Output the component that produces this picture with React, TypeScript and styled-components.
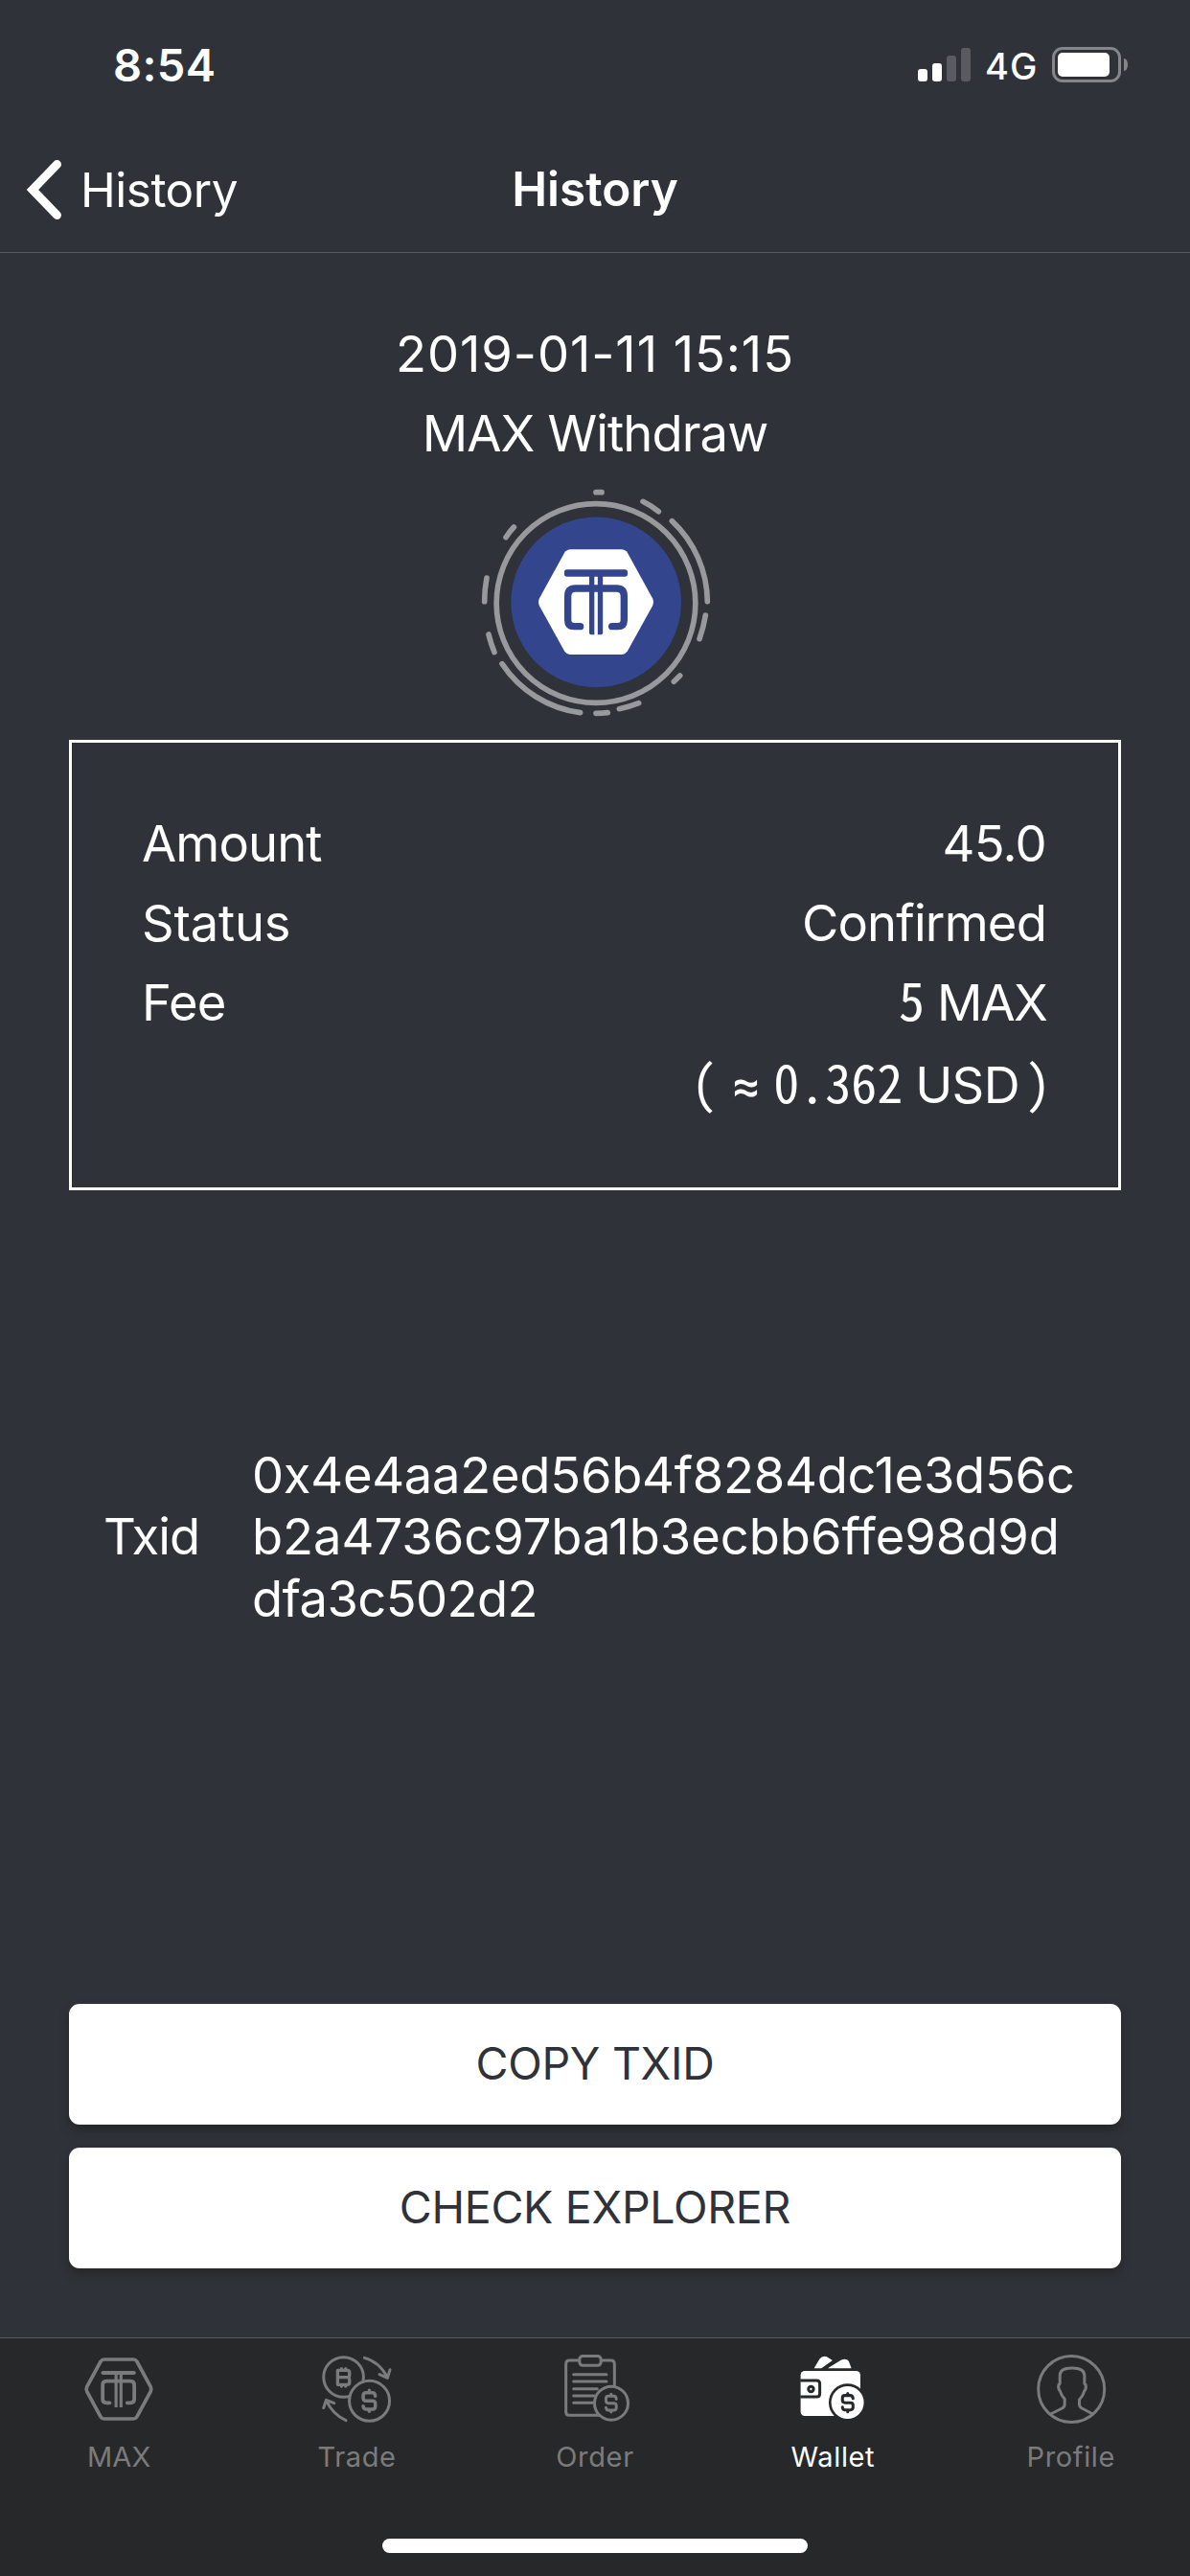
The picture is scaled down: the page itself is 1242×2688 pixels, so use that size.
import React from "react";
import styled, { createGlobalStyle } from "styled-components";

const color = {
  page: "#2f3239",
  bar: "#27282a",
  line: "#5a5b5f",
  muted: "#7b7b7b",
  ring: "#98999d",
  brand: "#33458c",
  white: "#ffffff",
};

const GlobalStyle = createGlobalStyle`
  * { box-sizing: border-box; }
  body {
    margin: 0;
    background: ${color.page};
    color: ${color.white};
    font-family: Inter, "Liberation Sans", sans-serif;
  }
`;

const Screen = styled.div`
  width: 1242px;
  height: 2688px;
  display: flex;
  flex-direction: column;
  background: ${color.page};
  overflow: hidden;
`;

/* Status bar */
const StatusBar = styled.header`
  height: 132px;
  padding: 3px 65px 0 118px;
  display: flex;
  align-items: center;
  justify-content: space-between;
`;
const Clock = styled.span`
  font-size: 47px;
  font-weight: 600;
  letter-spacing: 0.4px;
`;
const StatusIcons = styled.div`
  display: flex;
  align-items: center;
`;
const Signal = styled.div`
  display: flex;
  align-items: flex-end;
  gap: 5px;
  height: 35px;
`;
const SignalBar = styled.span<{ $height: number; $on: boolean }>`
  width: 10px;
  height: ${(p) => p.$height}px;
  border-radius: 3px;
  background: ${(p) => (p.$on ? color.white : "#595b60")};
`;
const Network = styled.span`
  width: 53px;
  margin: 3px 17px 0 15px;
  font-size: 38px;
  font-weight: 500;
  letter-spacing: 1.1px;
  white-space: nowrap;
`;
const Battery = styled.div`
  width: 72px;
  height: 37px;
  padding: 3px;
  border: 3px solid #858689;
  border-radius: 11px;
`;
const BatteryLevel = styled.div`
  width: 54px;
  height: 25px;
  border-radius: 5px;
  background: ${color.white};
`;
const BatteryCap = styled.div`
  width: 4px;
  height: 13px;
  margin-left: 3px;
  border-radius: 0 4px 4px 0 / 0 6px 6px 0;
  background: #858689;
`;

/* Navigation bar */
const NavBar = styled.nav`
  height: 132px;
  padding: 0 27px;
  display: grid;
  grid-template-columns: 1fr auto 1fr;
  align-items: center;
  border-bottom: 1px solid ${color.line};
`;
const BackButton = styled.a`
  display: flex;
  align-items: center;
  gap: 20px;
  font-size: 49.5px;
  letter-spacing: -0.5px;
`;
const NavTitle = styled.h1`
  margin: 0 0 2px;
  font-size: 49.5px;
  font-weight: 600;
`;

/* Content */
const Main = styled.main`
  flex: 1;
  padding: 64.4px 72px 72px;
  display: flex;
  flex-direction: column;
  font-size: 52.5px;
`;
const Summary = styled.section`
  display: flex;
  flex-direction: column;
  align-items: center;
  line-height: 83px;
  & > svg {
    display: block;
    margin: 12.3px 0 25.3px;
  }
`;
const Line = styled.div<{ $tracking: number }>`
  letter-spacing: ${(p) => p.$tracking}px;
`;
const Card = styled.section`
  height: 470px;
  padding: 64.4px 75px 0 73px;
  border: 3px solid ${color.white};
`;
const Row = styled.div`
  display: flex;
  justify-content: space-between;
  line-height: 83px;
`;
const RowText = styled.span<{ $tracking?: number }>`
  letter-spacing: ${(p) => p.$tracking ?? -0.9}px;
  white-space: nowrap;
`;
const Value = styled.span`
  display: flex;
  align-items: baseline;
`;
const MonoDigits = styled.span`
  font-family: "Noto Sans Mono CJK SC", "Noto Sans CJK SC", monospace;
  font-size: 54px;
  line-height: 0;
  letter-spacing: 0;
`;
const Conversion = styled.div`
  margin-right: -5px;
  display: flex;
  justify-content: flex-end;
  align-items: baseline;
  line-height: 89px;
`;
const Paren = styled.span`
  width: 27px;
  font-family: "Noto Sans Mono CJK SC", monospace;
  font-size: 54px;
  line-height: 0;
`;
const Approx = styled.span`
  width: 27px;
  margin: 0 16px;
  text-align: center;
  font-family: Roboto, sans-serif;
  font-size: 50px;
  font-weight: 500;
  line-height: 0;
`;
const Unit = styled.span`
  margin: 0 6px 0 13px;
  letter-spacing: -0.6px;
`;
const TxRow = styled.section`
  margin-top: 265.2px;
  padding-left: 36px;
  display: flex;
  align-items: center;
  line-height: 64.3px;
`;
const TxLabel = styled.div`
  width: 155px;
  letter-spacing: -1px;
`;
const Actions = styled.div`
  margin-top: auto;
  display: grid;
  gap: 24px;
`;
const ActionButton = styled.button`
  height: 126px;
  padding: 0 0 2px;
  border: 0;
  border-radius: 11px;
  background: ${color.white};
  color: #2f3239;
  font: 400 46.5px Inter, "Liberation Sans", sans-serif;
  letter-spacing: -0.3px;
  box-shadow: 0 6px 10px rgba(32, 32, 32, 0.6);
`;

/* Tab bar */
const TabBar = styled.footer`
  height: 249px;
  padding: 13px 0 24px;
  display: flex;
  flex-direction: column;
  align-items: center;
  justify-content: space-between;
  border-top: 1px solid ${color.line};
  background: ${color.bar};
`;
const Tabs = styled.div`
  width: 100%;
  display: grid;
  grid-template-columns: repeat(5, 1fr);
`;
const Tab = styled.a<{ $active?: boolean; $tracking?: number }>`
  display: flex;
  flex-direction: column;
  align-items: center;
  gap: 12.5px;
  color: ${(p) => (p.$active ? color.white : color.muted)};
  font-size: 29px;
  line-height: 36px;
  letter-spacing: ${(p) => p.$tracking ?? 0.65}px;
`;
const HomeIndicator = styled.div`
  width: 444px;
  height: 15px;
  border-radius: 8px;
  background: ${color.white};
`;

const CoinBadge = () => (
  <svg width="240" height="240" viewBox="360 560 720 720" fill="none" overflow="visible">
    <circle cx="723.5" cy="924" r="266.5" fill={color.brand} />
    <circle cx="723" cy="927.5" r="311.5" stroke={color.ring} strokeWidth="17" />
    <g stroke={color.ring} strokeWidth="17" strokeLinecap="round">
      <path d="M723 580h18M870 609q26 13 49 31M961 670A349 349 0 0 1 1072 922M1066 965q-6 38-19 74M986 1154l-19 19M857 1240q-30 12-61 18M760 1270q-18 2-37 2M674 1270A349 349 0 0 1 429 1117M405 1081q-11-27-18-56M374 922q0-37 7-74M441 721q11-17 25-32" />
    </g>
    <path
      fill={color.white}
      d="M644 759H802Q815 759 822 770L900 912Q906 924 900 936L822 1077Q815 1088 802 1088H644Q631 1088 624 1077L546 936Q540 924 546 912L624 770Q631 759 644 759Z"
    />
    <g stroke={color.brand} strokeWidth="22" strokeLinecap="round">
      <path d="M674 1000H655Q635 1000 635 980V905Q635 881 659 881H787Q811 881 811 905V980Q811 1000 791 1000H773" />
    </g>
    <rect x="624" y="822" width="198" height="22" rx="8" fill={color.brand} />
    <path fill={color.brand} d="M702 840h16v186h-10q-6 0-6-6zM728.500 840h16v180q0 6-6 6h-10z" />
  </svg>
);

const iconProps = (x: number) => ({
  width: 80,
  height: 80,
  viewBox: `${x} 99 240 240`,
  overflow: "visible",
  fill: "none",
  stroke: "currentColor",
  strokeWidth: 9,
  strokeLinecap: "round" as const,
  strokeLinejoin: "round" as const,
});

const Dollar = ({ x, y, scale = 1 }: { x: number; y: number; scale?: number }) => (
  <path
    transform={`translate(${x} ${y}) scale(${scale})`}
    strokeWidth={10.5}
    d="M19-15Q18-26 10-26H-10Q-19-26-19-17V-9Q-19 0-10 0H10Q19 0 19 9V17Q19 26 10 26H-10Q-18 26-19 16M0-33v7M0 26v7"
  />
);

const MaxIcon = () => (
  <svg {...iconProps(132.6)}>
    <path
      strokeWidth="11"
      d="M207 126H298Q305 126 309 132L352 211Q356 219 352 227L309 306Q305 312 298 312H207Q200 312 196 306L153 227Q149 219 153 211L196 132Q200 126 207 126Z"
    />
    <path
      strokeWidth="11.500"
      d="M224 262H214Q202 262 202 250V207Q202 194 214 194H289Q301 194 301 207V250Q301 262 289 262H279"
    />
    <path strokeWidth="12" d="M203 168H300" />
    <path strokeWidth="9.500" strokeLinecap="butt" d="M244 170V276M259.500 170V276" />
  </svg>
);

const TradeIcon = () => (
  <svg {...iconProps(877.8)}>
    <circle cx="954.500" cy="181.500" r="62.500" />
    <circle cx="1035.500" cy="256" r="63" fill={color.bar} />
    <path
      strokeWidth="10"
      d="M936 160H966Q973 160 973 167V175Q973 182 966 182H936M966 182Q973 182 973 190V198Q973 205 966 205H936V160M948 155v5M961 155v5M948 205v5M961 205v5"
    />
    <Dollar x={1035} y={256} />
    <path d="M1020 121Q1066 133 1092 182M1067 173L1092 184L1100 158M962 317Q920 298 900 254M892 278L900 253L925 263" />
  </svg>
);

const OrderIcon = () => (
  <svg {...iconProps(123)}>
    <path d="M190 129H163Q152 129 152 140V290Q152 301 163 301H258M266 129H293Q304 129 304 140V208" />
    <rect x="194.500" y="115.500" width="67" height="29.500" rx="10" />
    <path d="M176 173H279M176 195H279M176 218H250M176 240H242M176 262H238" />
    <circle cx="294" cy="263" r="52.500" fill={color.bar} />
    <Dollar x={293.5} y={263} scale={0.85} />
  </svg>
);

const WalletIcon = () => (
  <svg {...iconProps(868.2)}>
    <g stroke="none" fill="currentColor">
      <path d="M930 154L948 124Q957 113 970 118L988 129L953 154ZM973 154L1014 128Q1032 121 1039 132L1047 154Z" />
      <rect x="888" y="162" width="187" height="141" rx="13" />
      <circle cx="1035" cy="261" r="59" fill={color.bar} />
      <circle cx="1035" cy="261" r="51" />
    </g>
    <g stroke={color.bar}>
      <path strokeLinecap="butt" d="M887 192H938Q948 192 948 202V233Q948 243 938 243H887" />
      <circle cx="920.500" cy="219" r="8" />
      <Dollar x={1035.5} y={261.5} scale={0.87} />
    </g>
  </svg>
);

const ProfileIcon = () => (
  <svg {...iconProps(353.4)}>
    <circle cx="474" cy="219" r="103.500" />
    <path d="M409 297L445 279Q453 274 453 266V250Q443 240 438 224Q432 218 434 206L438 202V176Q438 153 476 153Q514 153 515 176V202L519 206Q521 218 515 224Q511 240 499 252V266Q499 274 507 279L541 297" />
  </svg>
);

const signal = [13, 19, 27, 35];

export default function App() {
  return (
    <Screen>
      <GlobalStyle />
      <StatusBar>
        <Clock>8:54</Clock>
        <StatusIcons>
          <Signal>
            {signal.map((h, i) => (
              <SignalBar key={h} $height={h} $on={i < 2} />
            ))}
          </Signal>
          <Network>4G</Network>
          <Battery>
            <BatteryLevel />
          </Battery>
          <BatteryCap />
        </StatusIcons>
      </StatusBar>

      <NavBar>
        <BackButton>
          <svg width="37" height="64" viewBox="27 166 37 64" fill="none" stroke="#fff" strokeWidth="9" strokeLinecap="round">
            <path d="M59.500 171.500L34 198L59.500 224.500" />
          </svg>
          History
        </BackButton>
        <NavTitle>History</NavTitle>
      </NavBar>

      <Main>
        <Summary>
          <Line $tracking={0.94}>2019-01-11 15:15</Line>
          <Line $tracking={-0.9}>MAX Withdraw</Line>
          <CoinBadge />
        </Summary>

        <Card>
          <Row>
            <RowText>Amount</RowText>
            <RowText $tracking={-0.7}>45.0</RowText>
          </Row>
          <Row>
            <RowText $tracking={-0.2}>Status</RowText>
            <RowText $tracking={-0.8}>Confirmed</RowText>
          </Row>
          <Row>
            <RowText>Fee</RowText>
            <Value>
              <MonoDigits>5</MonoDigits>
              <RowText $tracking={-1.8}>&nbsp;MAX</RowText>
            </Value>
          </Row>
          <Conversion>
            <Paren>(</Paren>
            <Approx>≈</Approx>
            <MonoDigits>0.362</MonoDigits>
            <Unit>USD</Unit>
            <Paren>)</Paren>
          </Conversion>
        </Card>

        <TxRow>
          <TxLabel>Txid</TxLabel>
          <div>
            <Line $tracking={-0.27}>0x4e4aa2ed56b4f8284dc1e3d56c</Line>
            <Line $tracking={-0.03}>b2a4736c97ba1b3ecbb6ffe98d9d</Line>
            <Line $tracking={-0.6}>dfa3c502d2</Line>
          </div>
        </TxRow>

        <Actions>
          <ActionButton>COPY TXID</ActionButton>
          <ActionButton>CHECK EXPLORER</ActionButton>
        </Actions>
      </Main>

      <TabBar>
        <Tabs>
          <Tab $tracking={0.2}>
            <MaxIcon />
            MAX
          </Tab>
          <Tab>
            <TradeIcon />
            Trade
          </Tab>
          <Tab>
            <OrderIcon />
            Order
          </Tab>
          <Tab $active>
            <WalletIcon />
            Wallet
          </Tab>
          <Tab>
            <ProfileIcon />
            Profile
          </Tab>
        </Tabs>
        <HomeIndicator />
      </TabBar>
    </Screen>
  );
}
